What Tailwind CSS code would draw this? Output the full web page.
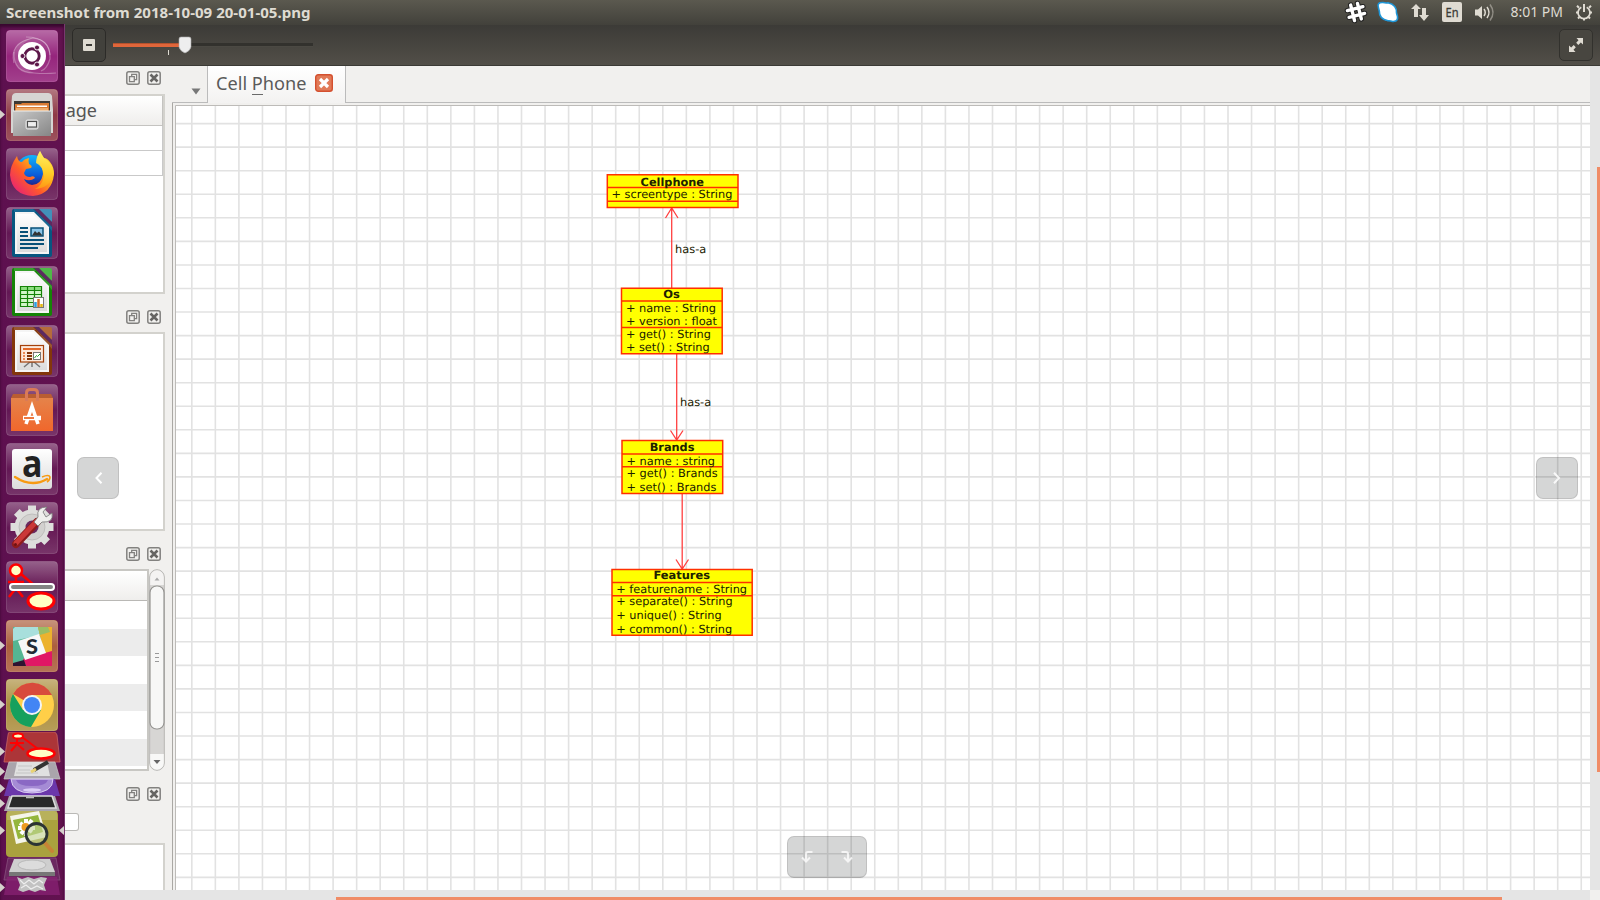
<!DOCTYPE html>
<html lang="en">
<head>
<meta charset="utf-8">
<title>Screenshot from 2018-10-09 20-01-05.png</title>
<script src="https://cdn.jsdelivr.net/npm/@tailwindcss/browser@4"></script>
</head>
<body class="w-[1600px] h-[900px] overflow-hidden bg-[#f1f0ee] font-['Noto_Sans','Open_Sans',sans-serif]">
<svg width="0" height="0" class="absolute">
  <defs>
    <linearGradient id="shine" x1="0" y1="0" x2="0" y2="1"><stop offset="0" stop-color="#fff" stop-opacity=".34"/><stop offset=".5" stop-color="#fff" stop-opacity=".03"/><stop offset="1" stop-color="#fff" stop-opacity=".15"/></linearGradient>
    <linearGradient id="paper" x1="0" y1="0" x2="0" y2="1"><stop offset="0" stop-color="#fff"/><stop offset="1" stop-color="#dcdcdc"/></linearGradient>
    <linearGradient id="metal" x1="0" y1="0" x2="1" y2="1"><stop offset="0" stop-color="#c8c8c8"/><stop offset="1" stop-color="#868686"/></linearGradient>
    <linearGradient id="fox" x1="1" y1="0" x2="0" y2="1"><stop offset="0" stop-color="#fff44f"/><stop offset=".35" stop-color="#ffb515"/><stop offset=".6" stop-color="#ff5a2a"/><stop offset="1" stop-color="#e0108c"/></linearGradient>
    <linearGradient id="flame" x1="0" y1="0" x2="0" y2="1"><stop offset="0" stop-color="#fff36a"/><stop offset=".55" stop-color="#ffd02a"/><stop offset="1" stop-color="#ff9a12"/></linearGradient>
    <linearGradient id="globe" x1="0" y1="0" x2="0" y2="1"><stop offset="0" stop-color="#12b4fb"/><stop offset=".6" stop-color="#0a5ad8"/><stop offset="1" stop-color="#2c0f6b"/></linearGradient>
    <linearGradient id="bag" x1="0" y1="0" x2="0" y2="1"><stop offset="0" stop-color="#e5834a"/><stop offset="1" stop-color="#f0672c"/></linearGradient>
    <symbol id="tile" viewBox="0 0 52 52"><rect x=".5" y=".5" width="51" height="51" rx="3.5" fill="url(#shine)" stroke="#fff" stroke-opacity=".16"/></symbol>
    <symbol id="dock" viewBox="0 0 36 14"><g fill="none" stroke="#82817f" stroke-width="1.5"><rect x=".8" y=".8" width="12.4" height="12.4" rx="2"/><rect x="21.8" y=".8" width="12.4" height="12.4" rx="2"/><path d="M5.7 5.5V3.4H10.6V8.7H8.6M3.5 5.7H8.3V10.6H3.5Z" stroke-width="1.3"/></g><path d="M24.500 3.500L31.500 10.500M31.500 3.500L24.500 10.500" stroke="#666563" stroke-width="2.6"/></symbol>
    <symbol id="arrow" viewBox="0 0 5 9"><path d="M0 0L5 4.5L0 9Z" fill="#d5d0cb"/></symbol>
  </defs>
</svg>
<div class="flex h-[900px] w-[1600px] flex-col">
  <!-- Top panel -->
  <header class="flex h-[25px] shrink-0 items-center justify-between bg-linear-to-b from-[#5b594f] to-[#42413b] pl-[6px]">
    <span class="whitespace-nowrap text-[13.5px] font-bold"><svg width="312" height="24" class="block"><text x="0" y="16.5" textLength="304.5" lengthAdjust="spacingAndGlyphs" fill="#dfdbd2">Screenshot from 2018-10-09 20-01-05.png</text></svg></span>
    <svg width="260" height="25" viewBox="1340 0 260 25" fill="#dfdbd2">
      <g stroke-linecap="round" transform="rotate(-14 1356 12)"><path d="M1352.500 4V20M1359.500 4V20M1348 8.500H1364M1348 15.500H1364" stroke="#222" stroke-width="5.4"/><path d="M1352.500 4V20M1359.500 4V20M1348 8.500H1364M1348 15.500H1364" stroke="#fff" stroke-width="3.4"/></g>
      <path d="M1378.500 8Q1376.500 2 1383 2.500Q1385.500 3.200 1388 2.800Q1397 5 1396.500 13Q1400 22 1392.500 21.500Q1390 20.500 1388 20.800Q1379 19 1379.300 11Z" fill="#fff" stroke="#1e96d8" stroke-width="1.600"/>
      <path d="M1411 9L1416 4L1421 9H1418V17H1414V9ZM1419 15L1424 21L1429 15H1426V8H1422V15Z"/>
      <rect x="1442" y="2" width="20" height="20" rx="2"/><text x="1445.500" y="17" textLength="13" lengthAdjust="spacingAndGlyphs" font-size="12.500" fill="#3c3b37" stroke="#3c3b37" stroke-width=".3">En</text>
      <path d="M1475 9.5H1478L1482 6V19L1478 15.5H1475Z"/><g fill="none" stroke="#dfdbd2" stroke-width="1.5"><path d="M1484 9Q1486.5 12.5 1484 16"/><path d="M1487 7Q1491 12.5 1487 18"/><path d="M1490 4.5Q1496 12.5 1490 20.5" opacity=".45"/><path d="M1581.3 7.3A6 6 0 1 0 1586.7 7.3" stroke-width="1.8"/><path d="M1584 4V12" stroke-width="2"/><path d="M1577 5.8L1579 7.8M1591 5.8L1589 7.8M1576 12.6H1578M1590 12.6H1592M1578 18.5L1579.5 17M1590 18.5L1588.5 17M1584 18V20.5" stroke-width="2"/></g>
      <text x="1510.5" y="17" font-size="13.800" textLength="52.5" lengthAdjust="spacingAndGlyphs">8:01 PM</text>
    </svg>
  </header>
  <div class="flex h-[875px]">
    <!-- Launcher -->
    <aside class="-mt-px flex h-[876px] w-[65px] shrink-0 flex-col gap-[7px] border-r border-[#79386f] bg-linear-to-r from-[#5d104f] to-[#62124f] pt-[6px] shadow-[inset_0_3px_3px_#39082f]">
      <svg width="64" height="52" viewBox="-6 0 64 52"><rect width="52" height="52" rx="4" fill="#921e78"/><use href="#tile" width="52" height="52"/><g fill="none" stroke="#fff" stroke-opacity=".3" stroke-width="1.2"><path d="M8 33Q3 13 27 8Q43 10 44 25"/><path d="M20 7Q45 7 44 29Q41 39 35 41"/><path d="M8 22Q7 43 28 43Q40 44 50 43"/></g><path d="M8 22Q7 43 28 43Q15 38 12 26Q14 12 27 8Q10 10 8 22Z" fill="#fff" fill-opacity=".15"/><circle cx="26" cy="26" r="14" fill="#fff"/><circle cx="26" cy="26" r="7.2" fill="none" stroke="#5c1749" stroke-width="2.9"/><g fill="#5c1749" stroke="#fff" stroke-width=".9"><circle cx="16.5" cy="26" r="2.5"/><circle cx="31" cy="17.5" r="2.5"/><circle cx="31" cy="34.5" r="2.5"/></g></svg>
      <svg width="64" height="52" viewBox="-6 0 64 52"><rect width="52" height="52" rx="4" fill="#8b3340"/><use href="#tile" width="52" height="52"/><use href="#arrow" x="-6" y="21" width="5" height="9"/><path d="M6 7Q7 4 10 4H42Q45 4 46 7L47 21V44H5V21Z" fill="#d6d5d3"/><path d="M8 12H44V22H8Z" fill="#3d3a36"/><path d="M9 15H15L16 14H43V22H9Z" fill="#d97b34"/><path d="M11 16.5H41V18H11Z" fill="#fff"/><path d="M10 19H42V22H10Z" fill="#efad6c"/><path d="M7 22H45V47H7Z" fill="url(#metal)"/><path d="M7 22H45" stroke="#eee"/><rect x="20" y="31" width="12" height="9" rx="1.5" fill="#bdbdbd" stroke="#e8e8e8"/><rect x="21.5" y="32.5" width="9" height="5.5" fill="#eee" stroke="#4e4e4e" stroke-width="1.1"/></svg>
      <svg width="64" height="52" viewBox="-6 0 64 52"><use href="#tile" width="52" height="52"/><circle cx="26" cy="24" r="17" fill="url(#globe)"/><path d="M34 3Q31 8 31 14Q37 18 37 26Q35 37 26 37Q20 36 18 31Q24 34 29 30Q28 27 24 29Q19 29 18 25L20 21L25 20Q27 18 23 16Q22 13 23 10Q18 11 16 14Q12 14 11 8Q4 18 4 27Q6 47 27 48Q46 46 48 26Q48 19 44 14Q41 10 38 10Q35 7 34 3Z" fill="url(#fox)"/><path d="M34 3Q30 9 30 15Q37 18 38 28Q36 38 29 41Q44 40 48 26Q47 16 38 10Z" fill="url(#flame)" opacity=".9"/></svg>
      <svg width="64" height="52" viewBox="-6 0 64 52"><use href="#tile" width="52" height="52"/><path d="M8 2H31L46 17V48Q46 50 44 50H8Q6 50 6 48V4Q6 2 8 2Z" fill="#075680"/><path d="M28 2H44Q46 2 46 4V15L44 14L33 3Z" fill="#4290b9"/><path d="M28 2H33L46 15V20Z" fill="#5d2a60"/><path d="M8 2H27L46 20V24L30 5H8Z" fill="#1a6a96"/><path d="M9 5H28L43 20V47H9Z" fill="#f5f5f5"/><path d="M11 7H27L41 21V45H11Z" fill="url(#paper)"/><path d="M14 21H22M14 25H22M14 29H22M14 33H38M14 37H38M14 41H32" stroke="#075078" stroke-width="2"/><rect x="25" y="21" width="12" height="8" fill="#8bc5e8" stroke="#075078" stroke-width="1.5"/><path d="M26 28.5L29 24L31 26L33 24.5L36.5 28.5Z" fill="#333"/></svg>
      <svg width="64" height="52" viewBox="-6 0 64 52"><use href="#tile" width="52" height="52"/><path d="M8 2H31L46 17V48Q46 50 44 50H8Q6 50 6 48V4Q6 2 8 2Z" fill="#158307"/><path d="M28 2H44Q46 2 46 4V15L44 14L33 3Z" fill="#4fb848"/><path d="M28 2H33L46 15V20Z" fill="#5d2a60"/><path d="M8 2H27L46 20V24L30 5H8Z" fill="#36a02b"/><path d="M9 5H28L43 20V47H9Z" fill="#f5f5f5"/><path d="M11 7H27L41 21V45H11Z" fill="url(#paper)"/><path d="M14.500 20.500H35.500V40.500H14.500Z" fill="#d3f6c9"/><path d="M15 21H35V24H15Z" fill="#8dde80"/><path d="M14.500 20.500H35.500V40.500H14.500ZM14.500 24.500H35.500M14.500 28.500H35.500M14.500 32.500H35.500M14.500 36.500H35.500M21.500 20.500V40.500M28.500 20.500V40.500" fill="none" stroke="#158307" stroke-width="1.200"/><rect x="27.500" y="31.500" width="10" height="10" fill="#fff" stroke="#777"/><path d="M29.500 41V36" stroke="#2c9fe0" stroke-width="2.500"/><path d="M32.500 41V33" stroke="#d96c23" stroke-width="2.500"/><path d="M35.500 41V38" stroke="#e4b70f" stroke-width="2.500"/></svg>
      <svg width="64" height="52" viewBox="-6 0 64 52"><use href="#tile" width="52" height="52"/><path d="M8 2H31L46 17V48Q46 50 44 50H8Q6 50 6 48V4Q6 2 8 2Z" fill="#83360b"/><path d="M28 2H44Q46 2 46 4V15L44 14L33 3Z" fill="#b56b3b"/><path d="M28 2H33L46 15V20Z" fill="#5d2a60"/><path d="M8 2H27L46 20V24L30 5H8Z" fill="#99562f"/><path d="M9 5H28L43 20V47H9Z" fill="#f5f5f5"/><path d="M11 7H27L41 21V45H11Z" fill="url(#paper)"/><path d="M18 42L24 37H28L34 42M26 37V42" fill="none" stroke="#777" stroke-width="1.500"/><rect x="14.500" y="20.500" width="23" height="16.500" fill="#fce9dc" stroke="#a4410b" stroke-width="1.200"/><path d="M17 24H35" stroke="#e2692a" stroke-width="2"/><path d="M17 28H19M17 31H19M17 34H19" stroke="#e2692a" stroke-width="1.500"/><path d="M21 28H26M21 31H26M21 34H26" stroke="#83360b" stroke-width="1.800"/><rect x="27.500" y="27.500" width="7" height="7" fill="#fff" stroke="#777"/><path d="M28.500 33L30.500 30.500L31.500 31.500L34 29" stroke="#26a12c" fill="none"/></svg>
      <svg width="64" height="52" viewBox="-6 0 64 52"><use href="#tile" width="52" height="52"/><path d="M7 10H45L47 14H5Z" fill="#b95d32"/><path d="M5 14H47V47H5Z" fill="url(#bag)"/><path d="M20.500 17V9Q20.500 5.500 24 5.500H28Q31.500 5.500 31.500 9V17" fill="none" stroke="#d97a58" stroke-width="3"/><path d="M20 40L26 22.500L32 40" fill="none" stroke="#fff" stroke-width="3.600"/><path d="M17 34H35" stroke="#fff" stroke-width="4.500"/><path d="M18 34H28" stroke="#eb6a2c" stroke-width="1.800"/></svg>
      <svg width="64" height="52" viewBox="-6 0 64 52"><use href="#tile" width="52" height="52"/><rect x="6" y="6" width="40" height="40" rx="3" fill="url(#paper)"/><text x="16" y="33.500" font-family="Open Sans" font-weight="700" font-size="37" textLength="20.500" lengthAdjust="spacingAndGlyphs" fill="#222">a</text><path d="M9 34Q26 45 41 36" fill="none" stroke="#f79a12" stroke-width="2.400" stroke-linecap="round"/><path d="M36 34Q43 31 44 34Q44 37 41 39" fill="none" stroke="#f79a12" stroke-width="1.600"/></svg>
      <svg width="64" height="52" viewBox="-6 0 64 52"><use href="#tile" width="52" height="52"/><g stroke="#dededc" stroke-width="8"><path d="M26 3.500V46.500M4.500 25H47.500M10.800 9.800L41.200 40.200M41.200 9.800L10.800 40.200"/></g><circle cx="26" cy="25" r="17.500" fill="#dededc"/><circle cx="26" cy="25" r="13" fill="#d2d1cf" stroke="#b5b3b1" stroke-width=".7"/><circle cx="26" cy="25" r="6.500" fill="#6b2a60"/><path d="M10 42L31 20" stroke="#8e1b1c" stroke-width="8" stroke-linecap="round"/><path d="M10 41L30 20" stroke="#ca3838" stroke-width="5" stroke-linecap="round"/><path d="M28 20L32 15Q30 5 41 5L37 10L40 15L46 11Q48 21 36 20L32 24Z" fill="#efefed" stroke="#777" stroke-width=".8"/><circle cx="9.500" cy="42.500" r="1.500" fill="#6d1213"/></svg>
      <svg width="64" height="52" viewBox="-6 0 64 52"><use href="#tile" width="52" height="52"/><g stroke="#f00" stroke-width="2.500"><path d="M10 14V28M2 21H18M10 27L3 36M10 27L17 36M15 13L29 25" fill="none"/><circle cx="10" cy="9.500" r="6" fill="#ffffc4"/><ellipse cx="35" cy="40" rx="13" ry="8" fill="#ffffc4" stroke-width="3"/></g><rect x="4" y="23" width="44" height="6" rx="3" fill="#848484" stroke="#fff" stroke-width="2"/></svg>
      <svg width="64" height="52" viewBox="-6 0 64 52"><rect width="52" height="52" rx="4" fill="#a95a38"/><use href="#tile" width="52" height="52"/><use href="#arrow" x="-6" y="21" width="5" height="9"/><path d="M7 7H46V46H7Z" fill="#55b592"/><path d="M9 7H32L34 15L7 21V9Z" fill="#a8dfdc"/><path d="M32 7H46V32L38 34Z" fill="#ecb22e"/><path d="M32 7H42L44 12L34 15Z" fill="#9bbd64"/><path d="M46 31V46H20L17 39Z" fill="#e01765"/><path d="M7 43L18 40L20 46H7Z" fill="#301331"/><path d="M12 21L33 14L40 33L19 40Z" fill="#f8f8f8"/><text x="20" y="33.500" font-family="Lato" font-weight="900" font-size="20" textLength="12" lengthAdjust="spacingAndGlyphs" fill="#222b35">S</text></svg>
      <svg width="64" height="52" viewBox="-6 0 64 52"><rect width="52" height="52" rx="4" fill="#aa8c3b"/><use href="#tile" width="52" height="52"/><use href="#arrow" x="-6" y="21" width="5" height="9"/><circle cx="26" cy="26" r="22" fill="#ffcf48"/><path d="M26 26L7 15A22 22 0 0 1 46 16H26Z" fill="#d84a3c"/><path d="M7 15A22 22 0 0 0 25 48L35 31L17 31Z" fill="#16a05d"/><circle cx="26" cy="26" r="10" fill="#f4f4f4"/><circle cx="26" cy="26" r="8" fill="#4285f4"/></svg>
      <!-- Folded launcher entries -->
      <svg width="64" height="168" viewBox="0 732 64 168" class="-mt-[6px]">
        <path d="M10 732H54Q56 732 57 735L60 762H4L8 735Q8 732 10 732Z" fill="#ac3538" stroke="#c76665" stroke-width=".8"/><g fill="none" stroke="#f00" stroke-width="2"><path d="M17 738V744M10 743H24M17 744L11 751M17 744L24 750M22 737L38 749"/><ellipse cx="18" cy="736" rx="5" ry="2.600" fill="#ffffc4"/><ellipse cx="41" cy="753.500" rx="13.500" ry="5" fill="#ffffc4" stroke-width="2.500"/></g>
        <path d="M9 762H55L60 779H4Z" fill="#aaa5ac" stroke="#ccc" stroke-width=".7"/><path d="M17 762H47L50 776H14Z" fill="#e0e0e0"/><path d="M18 766H32M18 770H30M16 773H38" stroke="#c4c4c4"/><path d="M34 770L48 762" stroke="#333" stroke-width="4"/><path d="M31 772L36 769" stroke="#e9d273" stroke-width="3"/>
        <path d="M9 779H55L60 796H4Z" fill="#6b37ab"/><path d="M11 779H53Q53 793 32 793Q12 793 11 779Z" fill="#a58bd5" stroke="#d9ccf0" stroke-width="1"/><path d="M16 780H48Q46 786 32 786Q18 786 16 780Z" fill="#8a68c4"/><ellipse cx="32" cy="790" rx="9" ry="1.800" fill="#e8ddff" opacity=".8"/>
        <path d="M9 796H55L60 811H4Z" fill="#aaa7ad"/><path d="M12 796H52L56 808H8Z" fill="#292929" stroke="#ddd" stroke-width="1.500"/><path d="M26 797.500H34" stroke="#bbb" stroke-width="1.600"/>
        <rect x="6" y="811" width="52" height="46" rx="4" fill="#aaa13e"/><path d="M7 811H57V820H7Z" fill="#c2bc70" opacity=".6"/><path d="M10 816L39 811L47 837L16 844Z" fill="#f5f5e9"/><path d="M13 820L38 815L43 832L18 839Z" fill="#94b63c"/><g stroke="#fff" stroke-width="4"><path d="M20 823L32 832M26 819V836M18 828H35M21 834L32 820"/></g><circle cx="25.500" cy="827" r="4" fill="#ed9b1f"/><path d="M45 843L52 851" stroke="#c78336" stroke-width="4" stroke-linecap="round"/><circle cx="36.500" cy="834" r="10.500" fill="#c5d69b" fill-opacity=".6" stroke="#2c3434" stroke-width="2.800"/>
        <path d="M8 858H56L60 880H4Z" fill="#6b2860" stroke="#88507e" stroke-width=".8"/><path d="M14 859H50L55 872H9Z" fill="#cfcfcf"/><path d="M9 872H55V876H9Z" fill="#777"/><ellipse cx="32" cy="865" rx="14" ry="5" fill="#dcdcdc" stroke="#b9b9b9"/>
        <path d="M7 877H57L60 895H4Z" fill="#882273" fill-opacity=".75"/><path d="M17 877L22 879L28 877L34 879L41 877L47 878L44 885L46 891L40 890L35 892L29 890L23 892L18 890L20 885Z" fill="#c2c2c2"/><path d="M20 880L24 884L29 880L34 884L39 880L43 883M21 888L26 885L31 889L37 886L43 889" stroke="#eee" stroke-width="1.200" fill="none"/>
        <g fill="#d5d0cb"><path d="M0 747L5 751.500L0 756ZM0 767L5 771.500L0 776ZM0 784L5 788.500L0 793ZM0 799L5 803.500L0 808ZM0 826L5 830.500L0 835ZM0 883L5 887.500L0 892ZM64 826L59 830.500L64 835Z"/></g>
      </svg>
    </aside>
    <div class="flex w-[1535px] flex-col">
      <!-- Viewer toolbar -->
      <div class="flex h-[41px] shrink-0 items-start justify-between border-b border-[#3b3a35] bg-linear-to-b from-[#3c3b37] to-[#524f48] pr-[7px] pl-[7px]">
        <div class="flex items-center pt-[3px]">
          <button class="flex h-[34px] w-[34px] items-center justify-center rounded-[5px] border border-[#2c2b28] bg-[#42413c]"><span class="flex h-3 w-3 items-center justify-center rounded-[1px] bg-[#dfdbd2]"><span class="h-[2px] w-[6px] bg-[#3c3b37]"></span></span></button>
          <svg width="210" height="34" viewBox="106 28 210 34"><rect x="113" y="43" width="200" height="4" fill="#32312d"/><path d="M180 46.500H313" stroke="#4b4943"/><rect x="113" y="43" width="68" height="4" fill="#e0663a"/><path d="M113 43.500H181" stroke="#b5522e"/><path d="M168.500 50V55" stroke="#dfdbd2"/><path d="M181 37H189Q191 37 191 39V47Q190 51 185 53Q180 51 179 47V39Q179 37 181 37Z" fill="#eee" stroke="#aaa" stroke-width=".6"/></svg>
        </div>
        <button class="mt-1 flex h-8 w-[34px] items-center justify-center rounded-[5px] border border-[#32312d] bg-[#484640]"><svg width="14" height="14" viewBox="0 0 14 14"><path d="M7.500 0H14V6.500L11.800 4.500L9.300 7L7.200 4.800L9.500 2.200ZM0 7.500L2.200 9.500L4.700 7L6.800 9.200L4.500 11.800L6.500 14H0Z" fill="#dfdbd2"/></svg></button>
      </div>
      <div class="flex h-[824px] w-[1535px] bg-[#f1f0ee]">
        <!-- Docked panels -->
        <div class="flex w-[107px] shrink-0 flex-col overflow-hidden">
          <div class="flex h-[28px] shrink-0 pt-[5px] pl-[61px]"><svg width="36" height="14"><use href="#dock" width="36" height="14"/></svg></div>
          <div class="h-[200px] w-[100px] shrink-0 border-t-2 border-r-2 border-b-2 border-[#d3d2cd] bg-white">
            <div class="flex h-[30px] items-center overflow-hidden border-r border-b border-[#c4c3c0] bg-linear-to-b from-white to-[#efeeec]"><svg width="95" height="30"><text x="-8" y="21" font-size="18.500" textLength="40" lengthAdjust="spacingAndGlyphs" fill="#555">sage</text></svg></div>
            <div class="h-[25px] border-r border-b border-[#c9c9c9]"></div><div class="h-[25px] border-r border-b border-[#c9c9c9]"></div>
          </div>
          <div class="flex h-[38px] shrink-0 pt-[16px] pl-[61px]"><svg width="36" height="14"><use href="#dock" width="36" height="14"/></svg></div>
          <div class="h-[199px] w-[100px] shrink-0 border-t-2 border-r-2 border-b-2 border-[#d3d2cd] bg-white"></div>
          <div class="flex h-[38px] shrink-0 pt-[16px] pl-[61px]"><svg width="36" height="14"><use href="#dock" width="36" height="14"/></svg></div>
          <div class="flex h-[202px] shrink-0">
            <div class="w-[83.5px] border-t-2 border-r-2 border-b-2 border-[#c8c7c3] bg-white">
              <div class="h-[30px] border-b border-[#b9b8b5] bg-linear-to-b from-white to-[#efeeec]"></div>
              <div class="h-[28px]"></div><div class="h-[27px] bg-[#ececec]"></div><div class="h-[28px]"></div><div class="h-[27px] bg-[#ececec]"></div><div class="h-[28px]"></div><div class="h-[27px] bg-[#ececec]"></div>
            </div>
            <svg width="16" height="202" viewBox="0 0 16 202"><rect x=".7" y=".7" width="14.600" height="200.600" rx="7.300" fill="#d7d6d4" stroke="#b7b6b3"/><path d="M1.200 16V8A6.800 6.800 0 0 1 14.800 8V16Z" fill="#f4f3f2"/><path d="M1.200 185H14.800V194A6.800 6.800 0 0 1 1.200 194Z" fill="#f8f8f7"/><rect x="1" y="17" width="14" height="143" rx="6.500" fill="#f7f7f6" stroke="#969592" stroke-width="1.200"/><path d="M5.500 11.500L8 8.500L10.500 11.500Z" fill="#aaa"/><path d="M4.500 191H11.500L8 195Z" fill="#666"/><path d="M6 84.500H10M6 88.500H10M6 92.500H10" stroke="#999"/></svg>
          </div>
          <div class="flex h-[42px] shrink-0 pt-[16px] pl-[61px]"><svg width="36" height="14"><use href="#dock" width="36" height="14"/></svg></div>
          <div class="h-[18px] w-[13.5px] shrink-0 rounded-r-[3px] border-[1.5px] border-l-0 border-[#bab9b6] bg-white"></div>
          <div class="mt-[12px] h-[60px] w-[100px] shrink-0 border-t-2 border-r-2 border-[#d3d2cd] bg-white"></div>
        </div>
        <!-- Diagram editor -->
        <main class="flex w-[1418px] flex-col">
          <div class="flex h-[37px] shrink-0 items-stretch">
            <div class="flex w-[35px] items-start border-b border-[#bbb] pt-[22px] pl-[19px]"><svg width="10" height="7"><path d="M.5 .5H9.500L5 6.500Z" fill="#777"/></svg></div>
            <div class="flex w-[139px] items-start border-r border-l border-[#bbb] bg-linear-to-b from-white to-[#f3f2f1] pl-[8px]"><svg width="99" height="34"><text x="0" y="23.700" font-size="18.500" textLength="90.500" lengthAdjust="spacingAndGlyphs" fill="#5a5a5a">Cell Phone</text><path d="M36 28.500H47" stroke="#6a6a6a"/></svg><svg width="18" height="18" class="mt-[8px]"><rect x=".7" y=".7" width="16.600" height="16.600" rx="2.500" fill="#e17a58" stroke="#d4502f" stroke-width="1.400"/><path d="M5 5L13 13M13 5L5 13" stroke="#fff" stroke-width="3.200"/></svg></div>
            <div class="flex-1 border-b border-[#bbb]"></div>
          </div>
          <svg width="1418" height="787" viewBox="172 103 1418 787" font-family="DejaVu Sans, sans-serif" font-size="11.200" text-rendering="geometricPrecision" fill="#202000">
            <rect x="172" y="103" width="1418" height="787" fill="#f1f0ee"/><path d="M172.500 890V103" stroke="#aaa8a4"/><path d="M175.500 890V105.500H1590" fill="#fff" stroke="#bdbbb8"/><path d="M176 106H1590V890H176Z" fill="#fff"/>
            <path id="grid" fill="none" stroke="#e2e2e2" stroke-width="1.600"/>
            <g id="links" fill="none" stroke="#ff4040" stroke-width="1.300"><path d="M671.700 288V208M665.500 218L671.700 208L678 218"/><path d="M676.700 354V440M670.500 430.500L676.700 440L683 430.500"/><path d="M682.200 494V569M676 559.500L682.200 569L688.500 559.500"/></g>
            <g fill="#ff0" stroke="#ff3000" stroke-width="1.500"><path d="M607.300 174.700H738V207.400H607.300ZM607.300 187.500H738M607.300 201.300H738"/><path d="M621.500 288.200H722.200V353.800H621.500ZM621.500 301H722.200M621.500 327.400H722.200"/><path d="M622 440.500H722.700V493.500H622ZM622 454H722.700M622 466.700H722.700"/><path d="M612 569.500H752.200V635.200H612ZM612 582.600H752.200M612 595.700H752.200"/></g>
            <g id="labels"></g>
          </svg>
        </main>
        <div class="w-[10px] bg-[#e5e5e5]"><div class="mt-[101px] ml-[7px] h-[605px] w-[3px] bg-[#f08c66]"></div></div>
      </div>
      <div class="flex h-[10px] items-end bg-[#e5e5e5]"><div class="ml-[271px] h-[3px] w-[1166px] bg-[#f08c66]"></div><div class="ml-[88px] h-[10px] w-[10px] bg-[#f1f0ee]"></div></div>
    </div>
  </div>
</div>
<!-- Overlay controls -->
<button class="absolute top-[457px] left-[77px] flex h-[42px] w-[42px] items-center justify-center rounded-[7px] border border-black/10 bg-[#2e3432]/20"><svg width="8" height="12" class="ml-px"><path d="M6.500 .8L1.500 6L6.500 11.200" fill="none" stroke="#fff" stroke-width="2"/></svg></button>
<button class="absolute top-[457px] left-[1536px] flex h-[42px] w-[42px] items-center justify-center rounded-[7px] border border-black/10 bg-[#2e3432]/20"><svg width="8" height="12"><path d="M1 .8L6 6L1 11.200" fill="none" stroke="#fff" stroke-opacity=".85" stroke-width="2"/></svg></button>
<div class="absolute top-[836px] left-[787px] flex h-[42px] w-[80px] items-center justify-between rounded-[7px] border border-black/10 bg-[#2e3432]/20 px-[13px]">
  <svg width="12" height="12"><path d="M11.500 1H7Q5 1 5 3V10M1 6.500L5 10.500L9 6.500" fill="none" stroke="#fff" stroke-opacity=".75" stroke-width="2"/></svg>
  <svg width="12" height="12"><path d="M.5 1H5Q7 1 7 3V10M3 6.500L7 10.500L11 6.500" fill="none" stroke="#fff" stroke-opacity=".75" stroke-width="2"/></svg>
</div>
<script>
  let d = '';
  for (let i = 0; i < 60; i++) d += `M${(191.8 + i * 23.55).toFixed(2)} 106V890`;
  for (let i = 0; i < 33; i++) d += `M176 ${(123.6 + i * 23.555).toFixed(2)}H1590`;
  document.getElementById('grid').setAttribute('d', d);
  // text, left, right, baseline, bold
  const labels = [
    ['Cellphone', 640.6, 704, 185.7, 1], ['+ screentype : String', 611.5, 732.4, 198.3],
    ['has-a', 675.1, 706.3, 253],
    ['Os', 663.2, 679.8, 297.6, 1], ['+ name : String', 625.9, 715.9, 311.6], ['+ version : float', 625.9, 717, 325.2], ['+ get() : String', 625.9, 710.9, 337.7], ['+ set() : String', 625.9, 709.7, 351.3],
    ['has-a', 680, 711.2, 406],
    ['Brands', 649.7, 694.5, 451, 1], ['+ name : string', 626.5, 715, 464.8], ['+ get() : Brands', 626.5, 717.7, 477.2], ['+ set() : Brands', 626.5, 716.4, 490.8],
    ['Features', 653.5, 710, 579.4, 1], ['+ featurename : String', 616.3, 747, 592.8], ['+ separate() : String', 616.3, 732.7, 605.4], ['+ unique() : String', 616.3, 721.7, 619.2], ['+ common() : String', 616.3, 732.2, 632.8]
  ];
  const g = document.getElementById('labels');
  for (const [s, x1, x2, y, b] of labels) {
    const t = document.createElementNS('http://www.w3.org/2000/svg', 'text');
    t.textContent = s;
    t.setAttribute('x', x1); t.setAttribute('y', y);
    t.setAttribute('textLength', x2 - x1); t.setAttribute('lengthAdjust', 'spacingAndGlyphs');
    if (b) t.setAttribute('font-weight', 700);
    g.appendChild(t);
  }
</script>
</body>
</html>
